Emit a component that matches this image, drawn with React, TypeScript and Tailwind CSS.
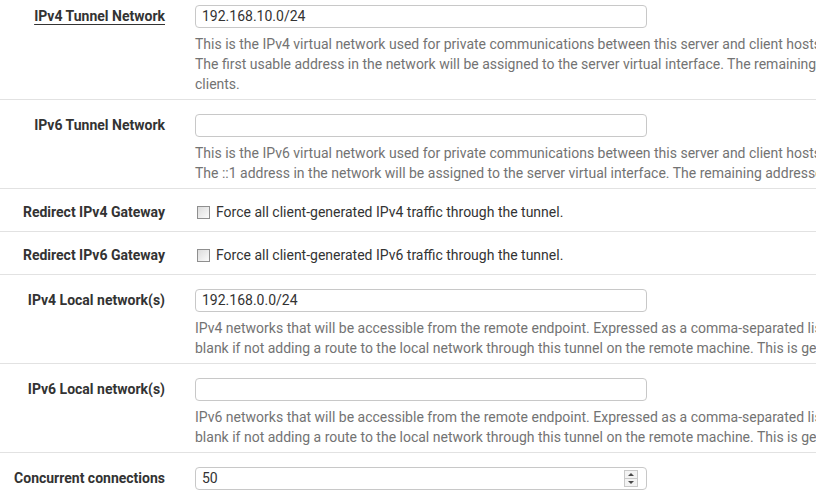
import React from "react";

type Row = {
  label: string;
  link?: boolean;
  kind: "text" | "check" | "number";
  value?: string;
  check?: string;
  help?: string[];
};

const rows: Row[] = [
  {
    label: "IPv4 Tunnel Network",
    link: true,
    kind: "text",
    value: "192.168.10.0/24",
    help: [
      "This is the IPv4 virtual network used for private communications between this server and client hosts expressed using CIDR notation (e.g. 10.0.0.0/24).",
      "The first usable address in the network will be assigned to the server virtual interface. The remaining usable addresses will be assigned to connecting",
      "clients.",
    ],
  },
  {
    label: "IPv6 Tunnel Network",
    kind: "text",
    value: "",
    help: [
      "This is the IPv6 virtual network used for private communications between this server and client hosts expressed using CIDR notation (e.g. fe80::/64).",
      "The ::1 address in the network will be assigned to the server virtual interface. The remaining addresses will be assigned to connecting clients.",
    ],
  },
  {
    label: "Redirect IPv4 Gateway",
    kind: "check",
    check: "Force all client-generated IPv4 traffic through the tunnel.",
  },
  {
    label: "Redirect IPv6 Gateway",
    kind: "check",
    check: "Force all client-generated IPv6 traffic through the tunnel.",
  },
  {
    label: "IPv4 Local network(s)",
    kind: "text",
    value: "192.168.0.0/24",
    help: [
      "IPv4 networks that will be accessible from the remote endpoint. Expressed as a comma-separated list of one or more CIDR ranges. This may be left",
      "blank if not adding a route to the local network through this tunnel on the remote machine. This is generally set to the LAN network.",
    ],
  },
  {
    label: "IPv6 Local network(s)",
    kind: "text",
    value: "",
    help: [
      "IPv6 networks that will be accessible from the remote endpoint. Expressed as a comma-separated list of one or more IP/PREFIX. This may be left",
      "blank if not adding a route to the local network through this tunnel on the remote machine. This is generally set to the LAN network.",
    ],
  },
  {
    label: "Concurrent connections",
    kind: "number",
    value: "50",
  },
];

function Checkbox() {
  return (
    <span className="inline-block w-[13px] h-[13px] border border-[#8f8f8f] bg-gradient-to-br from-[#dcdcdc] to-[#fbfbfb] shrink-0" />
  );
}

function Spinner() {
  return (
    <span className="absolute right-[8px] top-[2px] flex flex-col w-[14px] h-[17px] border border-[#c9c9c9] bg-[#f3f3f3]">
      <span className="flex-1 flex items-center justify-center border-b border-[#c9c9c9]">
        <span className="w-0 h-0 border-l-[3px] border-r-[3px] border-b-[3px] border-l-transparent border-r-transparent border-b-[#4a4a4a]" />
      </span>
      <span className="flex-1 flex items-center justify-center">
        <span className="w-0 h-0 border-l-[3px] border-r-[3px] border-t-[3px] border-l-transparent border-r-transparent border-t-[#4a4a4a]" />
      </span>
    </span>
  );
}

export default function App() {
  return (
    <div
      className="w-[816px] h-[497px] overflow-hidden bg-white text-[14px] text-[#333]"
      style={{ fontFamily: "Roboto, 'Liberation Sans', sans-serif" }}
    >
      <div className="w-[1100px] -mt-[9px]">
        {rows.map((row) => (
          <div
            key={row.label}
            className={`flex border-b border-[#e2e2e2] ${
              row.kind === "check" ? "pt-[13px] pb-[9px]" : "pt-[14px] pb-[5px]"
            }`}
          >
            <div className="w-[180px] pr-[15px] text-right font-bold leading-[20px] shrink-0">
              <span className={`${row.link ? "underline underline-offset-[3px]" : ""} ${row.kind === "check" ? "" : "relative top-[1px]"}`}>
                {row.label}
              </span>
            </div>
            <div className="pl-[15px] flex-1">
              {row.kind === "check" ? (
                <label className="flex items-center gap-[6px] leading-[20px] pl-[2px]">
                  <Checkbox />
                  <span>{row.check}</span>
                </label>
              ) : (
                <div className="relative w-[452px] h-[23px] border border-[#c8c8c8] rounded-[4px] bg-white px-[6px] leading-[21px] text-[#333]">
                  {row.value}
                  {row.kind === "number" && <Spinner />}
                </div>
              )}
              {row.help && (
                <div className="mt-[6px] text-[#737373] leading-[20px] whitespace-nowrap">
                  {row.help.map((line) => (
                    <div key={line}>{line}</div>
                  ))}
                </div>
              )}
              {row.kind === "number" && <div className="h-[40px]" />}
            </div>
          </div>
        ))}
      </div>
    </div>
  );
}
